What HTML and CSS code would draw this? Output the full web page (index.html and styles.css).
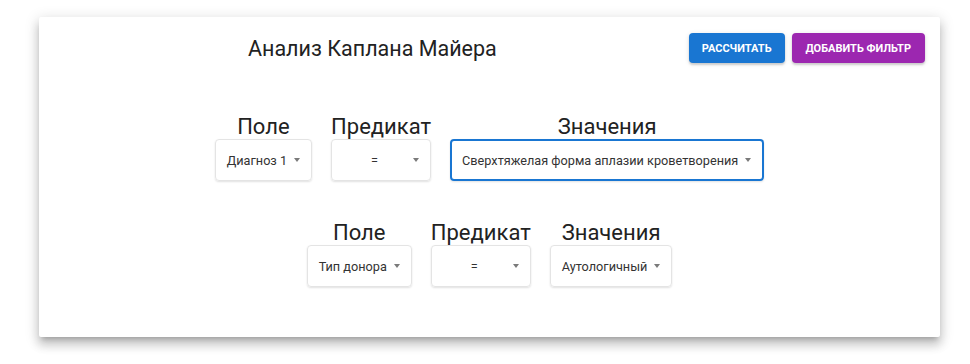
FILE: index.html
```html
<!DOCTYPE html>
<html lang="ru">
<head>
    <meta charset="UTF-8">
    <title>Анализ Каплана Майера</title>
    <link rel="stylesheet" href="styles.css">
</head>
<body>
    <div class="card">
        <div class="header">
            <h2 class="title">Анализ Каплана Майера</h2>
            <div class="actions">
                <button class="btn btn-blue">Рассчитать</button>
                <button class="btn btn-purple">Добавить фильтр</button>
            </div>
        </div>

        <div class="filter-row first">
            <div class="filter-col">
                <div class="filter-label">Поле</div>
                <div class="select"><span class="select-text">Диагноз 1</span><span class="arrow"></span></div>
            </div>
            <div class="filter-col">
                <div class="filter-label">Предикат</div>
                <div class="select"><span class="select-text">=</span><span class="arrow"></span></div>
            </div>
            <div class="filter-col">
                <div class="filter-label">Значения</div>
                <div class="select focused"><span class="select-text">Сверхтяжелая форма аплазии кроветворения</span><span class="arrow"></span></div>
            </div>
        </div>

        <div class="filter-row">
            <div class="filter-col">
                <div class="filter-label">Поле</div>
                <div class="select"><span class="select-text">Тип донора</span><span class="arrow"></span></div>
            </div>
            <div class="filter-col">
                <div class="filter-label">Предикат</div>
                <div class="select"><span class="select-text">=</span><span class="arrow"></span></div>
            </div>
            <div class="filter-col">
                <div class="filter-label">Значения</div>
                <div class="select"><span class="select-text">Аутологичный</span><span class="arrow"></span></div>
            </div>
        </div>
    </div>
</body>
</html>
```

FILE: styles.css
```css
body {
    margin: 0;
    min-height: 364px;
    background-color: #fff;
    font-family: Roboto, "Noto Sans", Arial, sans-serif;
    color: #222;
}
.card {
    margin: 17px 30px 0 39px;
    height: 320px;
    background: #fff;
    border-radius: 2px;
    box-shadow: 0 5px 5px -3px rgba(0,0,0,0.2), 0 8px 10px 1px rgba(0,0,0,0.14), 0 3px 14px 2px rgba(0,0,0,0.12);
}
.header {
    display: flex;
    align-items: center;
    padding: 16px 15px 0 209px;
}
.title {
    flex: 1;
    margin: 0;
    font-size: 21.5px;
    font-weight: 400;
    color: #222;
}
.actions {
    display: flex;
    gap: 7px;
}
.btn {
    height: 30px;
    padding: 0 13px;
    border: none;
    border-radius: 4px;
    color: #fff;
    font-family: Roboto, Arial, sans-serif;
    font-size: 11px;
    font-weight: 700;
    text-transform: uppercase;
    box-shadow: 0 2px 2px rgba(0,0,0,0.14), 0 1px 5px rgba(0,0,0,0.12);
    cursor: pointer;
}
.btn-blue {
    background-color: #1976d2;
}
.btn-purple {
    background-color: #9c27b0;
    padding: 0 14px;
}
.filter-row {
    display: flex;
    justify-content: center;
    gap: 19px;
    margin-top: 40px;
}
.filter-row.first {
    margin-top: 52px;
}
.filter-col {
    display: flex;
    flex-direction: column;
}
.filter-label {
    font-size: 22px;
    line-height: 24px;
    text-align: center;
    color: #222;
}
.select {
    display: flex;
    align-items: center;
    height: 42px;
    box-sizing: border-box;
    padding: 0 11px 0 11px;
    font-size: 12.7px;
    color: #333;
    border-radius: 4px;
    border: 1px solid #e4e4e4;
    box-shadow: 0 1px 2px rgba(0,0,0,0.12);
    white-space: nowrap;
}
.select.focused {
    border: 2px solid #1976d2;
    padding: 0 11px 0 10px;
}
.select-text {
    flex: 1;
    text-align: center;
}
.arrow {
    margin-left: 7px;
    width: 0;
    height: 0;
    border-left: 3.5px solid transparent;
    border-right: 3.5px solid transparent;
    border-top: 4px solid #7a7a7a;
}
```
